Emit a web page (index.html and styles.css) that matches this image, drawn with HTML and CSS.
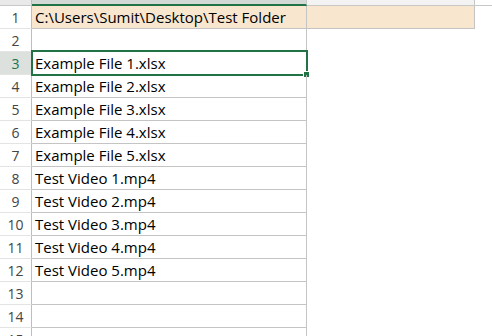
FILE: index.html
```html
<!DOCTYPE html>
<html lang="en">
<head>
<meta charset="utf-8">
<title>Sheet1</title>
<link rel="stylesheet" href="styles.css">
</head>
<body>
<div class="sheet">
  <div class="row head">
    <div class="rh corner"></div>
    <div class="ch a sel"></div>
    <div class="ch b"></div>
    <div class="ch rest"></div>
  </div>
  <div class="row">
    <div class="rh">1</div>
    <div class="cell a fill">C:\Users\Sumit\Desktop\Test Folder</div>
    <div class="cell b fill"></div>
  </div>
  <div class="row">
    <div class="rh">2</div>
    <div class="cell a"></div>
    <div class="cell b blank"></div>
  </div>
  <div class="row">
    <div class="rh active">3</div>
    <div class="cell a current">Example File 1.xlsx<span class="cursor"><span class="handle"></span></span></div>
    <div class="cell b blank"></div>
  </div>
  <div class="row">
    <div class="rh">4</div>
    <div class="cell a">Example File 2.xlsx</div>
    <div class="cell b blank"></div>
  </div>
  <div class="row">
    <div class="rh">5</div>
    <div class="cell a">Example File 3.xlsx</div>
    <div class="cell b blank"></div>
  </div>
  <div class="row">
    <div class="rh">6</div>
    <div class="cell a">Example File 4.xlsx</div>
    <div class="cell b blank"></div>
  </div>
  <div class="row">
    <div class="rh">7</div>
    <div class="cell a">Example File 5.xlsx</div>
    <div class="cell b blank"></div>
  </div>
  <div class="row">
    <div class="rh">8</div>
    <div class="cell a">Test Video 1.mp4</div>
    <div class="cell b blank"></div>
  </div>
  <div class="row">
    <div class="rh">9</div>
    <div class="cell a">Test Video 2.mp4</div>
    <div class="cell b blank"></div>
  </div>
  <div class="row">
    <div class="rh">10</div>
    <div class="cell a">Test Video 3.mp4</div>
    <div class="cell b blank"></div>
  </div>
  <div class="row">
    <div class="rh">11</div>
    <div class="cell a">Test Video 4.mp4</div>
    <div class="cell b blank"></div>
  </div>
  <div class="row">
    <div class="rh">12</div>
    <div class="cell a">Test Video 5.mp4</div>
    <div class="cell b blank"></div>
  </div>
  <div class="row">
    <div class="rh">13</div>
    <div class="cell a"></div>
    <div class="cell b blank"></div>
  </div>
  <div class="row">
    <div class="rh">14</div>
    <div class="cell a"></div>
    <div class="cell b blank"></div>
  </div>
  <div class="row">
    <div class="rh">15</div>
    <div class="cell a"></div>
    <div class="cell b blank"></div>
  </div>
</div>
</body>
</html>
```

FILE: styles.css
```css
html, body {
  margin: 0;
  padding: 0;
  background: #ffffff;
  overflow: hidden;
}

.sheet {
  width: 492px;
  height: 336px;
  overflow: hidden;
  font-family: "Open Sans", "Noto Sans", "Liberation Sans", sans-serif;
  font-size: 15px;
  color: #000000;
}

.row {
  display: flex;
  height: 23px;
}

.row.head {
  height: 6px;
}

/* column header strip */
.ch {
  height: 5px;
  border-bottom: 1px solid #c8c8c8;
  background: #f3f3f3;
  box-sizing: content-box;
}

.ch.a {
  width: 274px;
  border-right: 1px solid #c8c8c8;
}

.ch.sel {
  background: #d3dad6;
  height: 4px;
  border-bottom: 2px solid #217346;
}

.ch.b {
  width: 167px;
  border-right: 1px solid #c8c8c8;
}

.ch.rest {
  flex: 1;
  background: #ffffff;
}

/* row headers */
.rh {
  width: 31px;
  flex: none;
  height: 22px;
  border-right: 1px solid #bdbdbd;
  border-bottom: 1px solid #e4e4e4;
  color: #444444;
  font-size: 14px;
  text-align: center;
  line-height: 23px;
  box-sizing: content-box;
}

.rh.corner {
  height: 5px;
  border-bottom: 1px solid #c8c8c8;
  background: #e9e9e9;
}

.rh.active {
  background: #dde1de;
  color: #217346;
}

/* cells */
.cell {
  height: 22px;
  line-height: 22px;
  padding-left: 3px;
  white-space: nowrap;
  box-sizing: content-box;
  position: relative;
}

.cell.a {
  width: 271px;
  border-right: 1px solid #c4c4c4;
  border-bottom: 1px solid #c4c4c4;
}

.cell.b {
  width: 164px;
  border-right: 1px solid #c4c4c4;
  border-bottom: 1px solid #c4c4c4;
}

.cell.b.blank {
  border-color: transparent;
}

.cell.fill {
  background: #f8e6cf;
}

/* active cell outline with fill handle */
.cursor {
  position: absolute;
  left: -1px;
  top: -2px;
  width: 273px;
  height: 22px;
  border: 2px solid #217346;
}

.handle {
  position: absolute;
  right: -4px;
  bottom: -4px;
  width: 5px;
  height: 5px;
  background: #217346;
  border: 1px solid #ffffff;
}
```
